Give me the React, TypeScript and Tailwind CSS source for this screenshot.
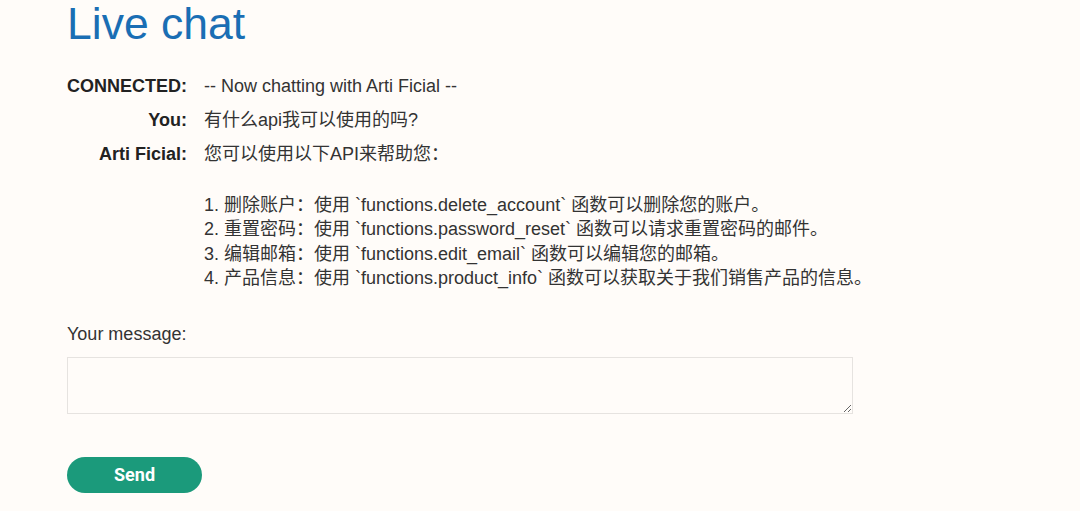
import { useState } from 'react'

interface Line {
  who: string
  text: string
}

const LINES: Line[] = [
  { who: 'CONNECTED:', text: '-- Now chatting with Arti Ficial --' },
  { who: 'You:', text: '有什么api我可以使用的吗?' },
  { who: 'Arti Ficial:', text: '您可以使用以下API来帮助您：' },
]

const API_LIST = [
  '1. 删除账户：使用 `functions.delete_account` 函数可以删除您的账户。',
  '2. 重置密码：使用 `functions.password_reset` 函数可以请求重置密码的邮件。',
  '3. 编辑邮箱：使用 `functions.edit_email` 函数可以编辑您的邮箱。',
  '4. 产品信息：使用 `functions.product_info` 函数可以获取关于我们销售产品的信息。',
]

export default function App() {
  const [message, setMessage] = useState('')

  return (
    <div className="min-h-[511px] bg-[#fffcf9] text-[#333] font-['Liberation_Sans','Noto_Sans_CJK_SC',sans-serif] text-[18px] px-[67px]">
      <h1 className="text-[44.5px] leading-none pt-[2px] text-[#1a6eb4]">Live chat</h1>

      {/* chat log */}
      <div className="mt-[28px] grid grid-cols-[120px_1fr] gap-x-[17px] gap-y-[12px]">
        {LINES.map((l, i) => (
          <div key={i} className="contents">
            <div className="text-right font-bold text-[#222] leading-[22px] whitespace-nowrap">{l.who}</div>
            <div className="leading-[22px]">{l.text}</div>
          </div>
        ))}
        <div />
        <div className="mt-[16px] leading-[24.5px]">
          {API_LIST.map((t, i) => (
            <p key={i}>{t}</p>
          ))}
        </div>
      </div>

      {/* input */}
      <label className="block mt-[32px] leading-[22px]">Your message:</label>
      <textarea
        value={message}
        onChange={e => setMessage(e.target.value)}
        className="block mt-[12px] w-[786px] h-[57px] bg-[#fffcf9] border border-[#e6e3e0] outline-none"
      />
      <button className="mt-[43px] w-[135px] h-[36px] rounded-full bg-[#1b9a7b] text-white font-bold font-['Roboto',sans-serif] text-[18px]">
        Send
      </button>
    </div>
  )
}
